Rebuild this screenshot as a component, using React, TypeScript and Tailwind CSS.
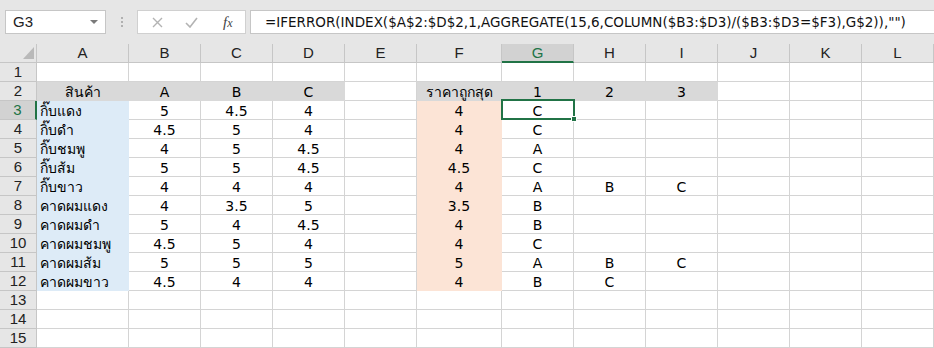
import React from "react";

type Fill = "none" | "head" | "blue" | "peach";

interface CellData {
  v?: string;
  fill?: Fill;
  align?: "left" | "center";
}

const colLetters = ["A", "B", "C", "D", "E", "F", "G", "H", "I", "J", "K", "L"];

const products: [string, string, string, string, string, string[]][] = [
  ["กิ๊บแดง", "5", "4.5", "4", "4", ["C"]],
  ["กิ๊บดำ", "4.5", "5", "4", "4", ["C"]],
  ["กิ๊บชมพู", "4", "5", "4.5", "4", ["A"]],
  ["กิ๊บส้ม", "5", "5", "4.5", "4.5", ["C"]],
  ["กิ๊บขาว", "4", "4", "4", "4", ["A", "B", "C"]],
  ["คาดผมแดง", "4", "3.5", "5", "3.5", ["B"]],
  ["คาดผมดำ", "5", "4", "4.5", "4", ["B"]],
  ["คาดผมชมพู", "4.5", "5", "4", "4", ["C"]],
  ["คาดผมส้ม", "5", "5", "5", "5", ["A", "B", "C"]],
  ["คาดผมขาว", "4.5", "4", "4", "4", ["B", "C"]],
];

function buildRows(): CellData[][] {
  const rows: CellData[][] = [];
  rows.push(colLetters.map(() => ({})));
  rows.push([
    { v: "สินค้า", fill: "head" },
    { v: "A", fill: "head" },
    { v: "B", fill: "head" },
    { v: "C", fill: "head" },
    {},
    { v: "ราคาถูกสุด", fill: "head" },
    { v: "1", fill: "head" },
    { v: "2", fill: "head" },
    { v: "3", fill: "head" },
    {},
    {},
    {},
  ]);
  products.forEach(([name, a, b, c, min, picks]) => {
    rows.push([
      { v: name, fill: "blue", align: "left" },
      { v: a },
      { v: b },
      { v: c },
      {},
      { v: min, fill: "peach" },
      { v: picks[0] },
      { v: picks[1] },
      { v: picks[2] },
      {},
      {},
      {},
    ]);
  });
  for (let i = 0; i < 3; i++) rows.push(colLetters.map(() => ({})));
  return rows;
}

const fillClass: Record<Fill, string> = {
  none: "bg-white border-[#d4d4d4]",
  head: "bg-[#d9d9d9] border-[#d9d9d9]",
  blue: "bg-[#ddebf7] border-[#ddebf7]",
  peach: "bg-[#fce4d6] border-[#fce4d6]",
};

function FormulaBar() {
  return (
    <div className="flex h-[44px] items-start bg-[#e6e6e6] pt-[10px] font-['Liberation_Sans',sans-serif]">
      <div className="ml-[5px] flex h-[24px] w-[101px] items-center justify-between border border-[#c6c6c6] bg-white pl-[7px] pr-[7px] text-[15px] text-[#222]">
        <span>G3</span>
        <svg width="8" height="5" viewBox="0 0 8 5">
          <path d="M0 0 L8 0 L4 4 Z" fill="#7a7a7a" />
        </svg>
      </div>
      <div className="flex h-[24px] w-[31px] flex-col items-center justify-center gap-[2px]">
        <span className="h-[2px] w-[2px] bg-[#b0b0b0]" />
        <span className="h-[2px] w-[2px] bg-[#b0b0b0]" />
        <span className="h-[2px] w-[2px] bg-[#b0b0b0]" />
      </div>
      <div className="flex h-[24px] w-[109px] items-center border border-[#d0d0d0] bg-white">
        <svg className="ml-[14px]" width="11" height="11" viewBox="0 0 11 11">
          <path d="M1 1 L10 10 M10 1 L1 10" stroke="#b3b3b3" strokeWidth="1.4" />
        </svg>
        <svg className="ml-[22px]" width="13" height="11" viewBox="0 0 13 11">
          <path d="M1 6 L5 10 L12 1" stroke="#b3b3b3" strokeWidth="1.6" fill="none" />
        </svg>
        <span className="ml-[25px] font-['Liberation_Serif',serif] text-[15px] italic text-[#444]">
          f<span className="text-[12px]">x</span>
        </span>
      </div>
      <div className="ml-[4px] flex h-[24px] flex-1 items-center border border-r-0 border-[#c6c6c6] bg-white pl-[14px] font-['DejaVu_Sans',sans-serif] text-[13.5px] tracking-[0px] text-[#111]">
        =IFERROR(INDEX($A$2:$D$2,1,AGGREGATE(15,6,COLUMN($B3:$D3)/($B3:$D3=$F3),G$2)),"")
      </div>
    </div>
  );
}

export default function App() {
  const rows = buildRows();
  return (
    <div className="h-[348px] w-[934px] overflow-hidden bg-white">
      <FormulaBar />
      <div className="grid grid-cols-[37px_92px_72px_72px_72px_72px_85px_72px_72px_72px_72px_72px_1fr] font-['DejaVu_Sans','Noto_Sans',sans-serif] text-[14px] text-black">
        <div className="relative h-[19px] border-b border-r border-[#c6c6c6] bg-[#e6e6e6]">
          <svg className="absolute right-[2px] bottom-[3px]" width="11" height="12" viewBox="0 0 11 12">
            <path d="M11 0 L11 12 L0 12 Z" fill="#b9b9b9" />
          </svg>
        </div>
        {colLetters.map((c) => (
          <div
            key={c}
            className={
              c === "G"
                ? "flex h-[19px] items-center justify-center border-b-2 border-r border-b-[#217346] border-r-[#c6c6c6] bg-[#d2d2d2] pt-[1px] font-['Liberation_Sans',sans-serif] text-[15px] text-[#217346]"
                : "flex h-[19px] items-center justify-center border-b border-r border-[#c6c6c6] bg-[#e6e6e6] font-['Liberation_Sans',sans-serif] text-[15px] text-[#222]"
            }
          >
            {c}
          </div>
        ))}
        {rows.map((row, ri) => (
          <React.Fragment key={ri}>
            <div
              className={
                ri === 2
                  ? "flex h-[19px] items-center justify-center border-b border-r-2 border-b-[#c6c6c6] border-r-[#217346] bg-[#d2d2d2] font-['Liberation_Sans',sans-serif] text-[15px] text-[#217346]"
                  : "flex h-[19px] items-center justify-center border-b border-r border-[#c6c6c6] bg-[#e6e6e6] font-['Liberation_Sans',sans-serif] text-[15px] text-[#222]"
              }
            >
              {ri + 1}
            </div>
            {row.map((cell, ci) => (
              <div
                key={ci}
                className={`relative flex h-[19px] items-end border-b border-r ${fillClass[cell.fill ?? "none"]} ${
                  cell.align === "left" ? "justify-start pl-[3px]" : "justify-center"
                }`}
              >
                <span className="whitespace-nowrap leading-[16px]">{cell.v}</span>
                {ri === 2 && ci === 6 && (
                  <div className="absolute -left-px -top-[2px] z-10 h-[21px] w-[74px] border-2 border-[#217346]">
                    <div className="absolute -bottom-[4px] -right-[4px] h-[6px] w-[6px] border border-white bg-[#217346]" />
                  </div>
                )}
              </div>
            ))}
          </React.Fragment>
        ))}
      </div>
    </div>
  );
}
